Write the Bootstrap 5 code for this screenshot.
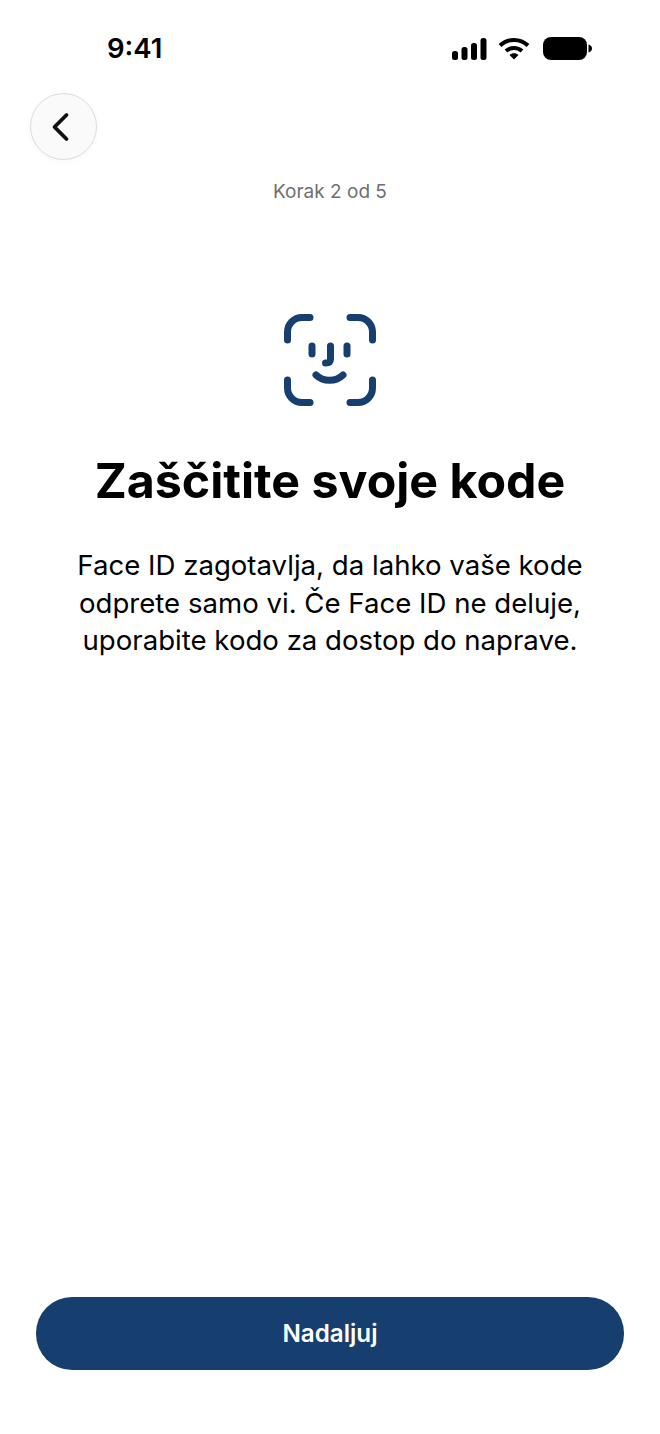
<!DOCTYPE html>
<html lang="sl">
<head>
    <title>Zaščitite svoje kode</title>
    <meta name="viewport" content="width=device-width, initial-scale=1.0">
    <link href="https://cdn.jsdelivr.net/npm/bootstrap@5.3.0/dist/css/bootstrap.min.css" rel="stylesheet">
    <style>
        body {
            background-color: #fff;
            font-family: "Inter", "Liberation Sans", sans-serif;
            color: #000;
        }
        .screen {
            width: 660px;
            height: 1434px;
        }
        .status-bar {
            height: 93px;
            padding: 32px 68px 0 107px;
        }
        .status-time {
            font-size: 27.5px;
            font-weight: 600;
            line-height: 33px;
        }
        .status-icons {
            height: 33px;
            gap: 11px;
        }
        .battery-icon {
            margin-left: 2px;
        }
        .back-row {
            padding-left: 30px;
        }
        .back-btn {
            width: 67px;
            height: 67px;
            padding: 0;
            background: #fafafa;
            border: 1px solid #dcdcdc;
            box-shadow: 0 2px 6px rgba(0,0,0,0.03);
        }
        .step-label {
            margin-top: 20px;
            font-size: 19px;
            line-height: 24px;
            color: #6f6f6f;
        }
        .face-icon {
            margin-top: 109px;
        }
        .page-title {
            margin-top: 45px;
            margin-bottom: 0;
            font-size: 48.3px;
            line-height: 58px;
            font-weight: 700;
            color: #000;
        }
        .page-text {
            margin-top: 37px;
            margin-bottom: 0;
            font-size: 27.6px;
            line-height: 37.5px;
        }
        .continue-wrap {
            padding: 0 36px 64px;
        }
        .continue-btn {
            height: 73px;
            padding-top: 8px;
            background: #163e6e;
            border: 0;
            border-radius: 36px;
            color: #fff;
            font-size: 24.2px;
            font-weight: 600;
        }
    </style>
</head>
<body>
    <div class="screen d-flex flex-column">
        <!-- status bar -->
        <div class="status-bar d-flex justify-content-between align-items-start">
            <span class="status-time">9:41</span>
            <div class="status-icons d-flex align-items-center">
                <svg width="35" height="22" viewBox="0 0 35 22" fill="#000">
                    <rect x="0" y="13" width="6" height="9" rx="2.5"/>
                    <rect x="9.5" y="9" width="6" height="13" rx="2.5"/>
                    <rect x="19" y="5" width="6" height="17" rx="2.5"/>
                    <rect x="28.5" y="0" width="6" height="22" rx="2.5"/>
                </svg>
                <svg width="32" height="23" viewBox="0 0 32 23" fill="none" stroke="#000" stroke-width="4">
                    <path d="M2 8.5 C10 1 22 1 30 8.5"/>
                    <path d="M8 14 C12.5 10 19.5 10 24 14"/>
                    <path d="M16 22.5 L11.5 18 C14 15.8 18 15.8 20.5 18 Z" fill="#000" stroke="none"/>
                </svg>
                <svg class="battery-icon" width="49" height="23" viewBox="0 0 49 23" fill="#000">
                    <rect x="0" y="0" width="44" height="23" rx="8"/>
                    <path d="M45.5 7.5 C47.5 8 49 9.5 49 11.5 C49 13.5 47.5 15 45.5 15.5 Z"/>
                </svg>
            </div>
        </div>

        <div class="back-row">
            <button type="button" class="back-btn rounded-circle d-flex align-items-center justify-content-center" aria-label="Nazaj">
                <svg width="26" height="32" viewBox="0 0 26 32" fill="none" stroke="#111" stroke-width="3.8" stroke-linecap="round" stroke-linejoin="round">
                    <path d="M15.5 4 L3.5 16 L15.5 28"/>
                </svg>
            </button>
        </div>

        <div class="step-label text-center">Korak 2 od 5</div>

        <!-- main content -->
        <div class="flex-grow-1 text-center">
            <svg class="face-icon" width="94" height="94" viewBox="0 0 94 94" fill="none" stroke="#163e6e" stroke-width="7" stroke-linecap="round" stroke-linejoin="round">
                <path d="M4.500 27 V19 A14.500 14.500 0 0 1 19 4.500 H27"/>
                <path d="M67 4.500 H75 A14.500 14.500 0 0 1 89.500 19 V27"/>
                <path d="M4.500 67 V75 A14.500 14.500 0 0 0 19 89.500 H27"/>
                <path d="M67 89.500 H75 A14.500 14.500 0 0 0 89.500 75 V67"/>
                <path d="M29 33 V41"/>
                <path d="M64 33 V41"/>
                <path d="M47.500 33 V46 C47.500 49 46 50 42.500 50"/>
                <path d="M33 62 C40 69 53 69 60 62"/>
            </svg>
            <h1 class="page-title">Zaščitite svoje kode</h1>
            <p class="page-text">Face ID zagotavlja, da lahko vaše kode<br>odprete samo vi. Če Face ID ne deluje,<br>uporabite kodo za dostop do naprave.</p>
        </div>

        <div class="continue-wrap">
            <button type="button" class="btn continue-btn w-100">Nadaljuj</button>
        </div>
    </div>

    <script src="https://cdn.jsdelivr.net/npm/bootstrap@5.3.0/dist/js/bootstrap.bundle.min.js"></script>
</body>
</html>
